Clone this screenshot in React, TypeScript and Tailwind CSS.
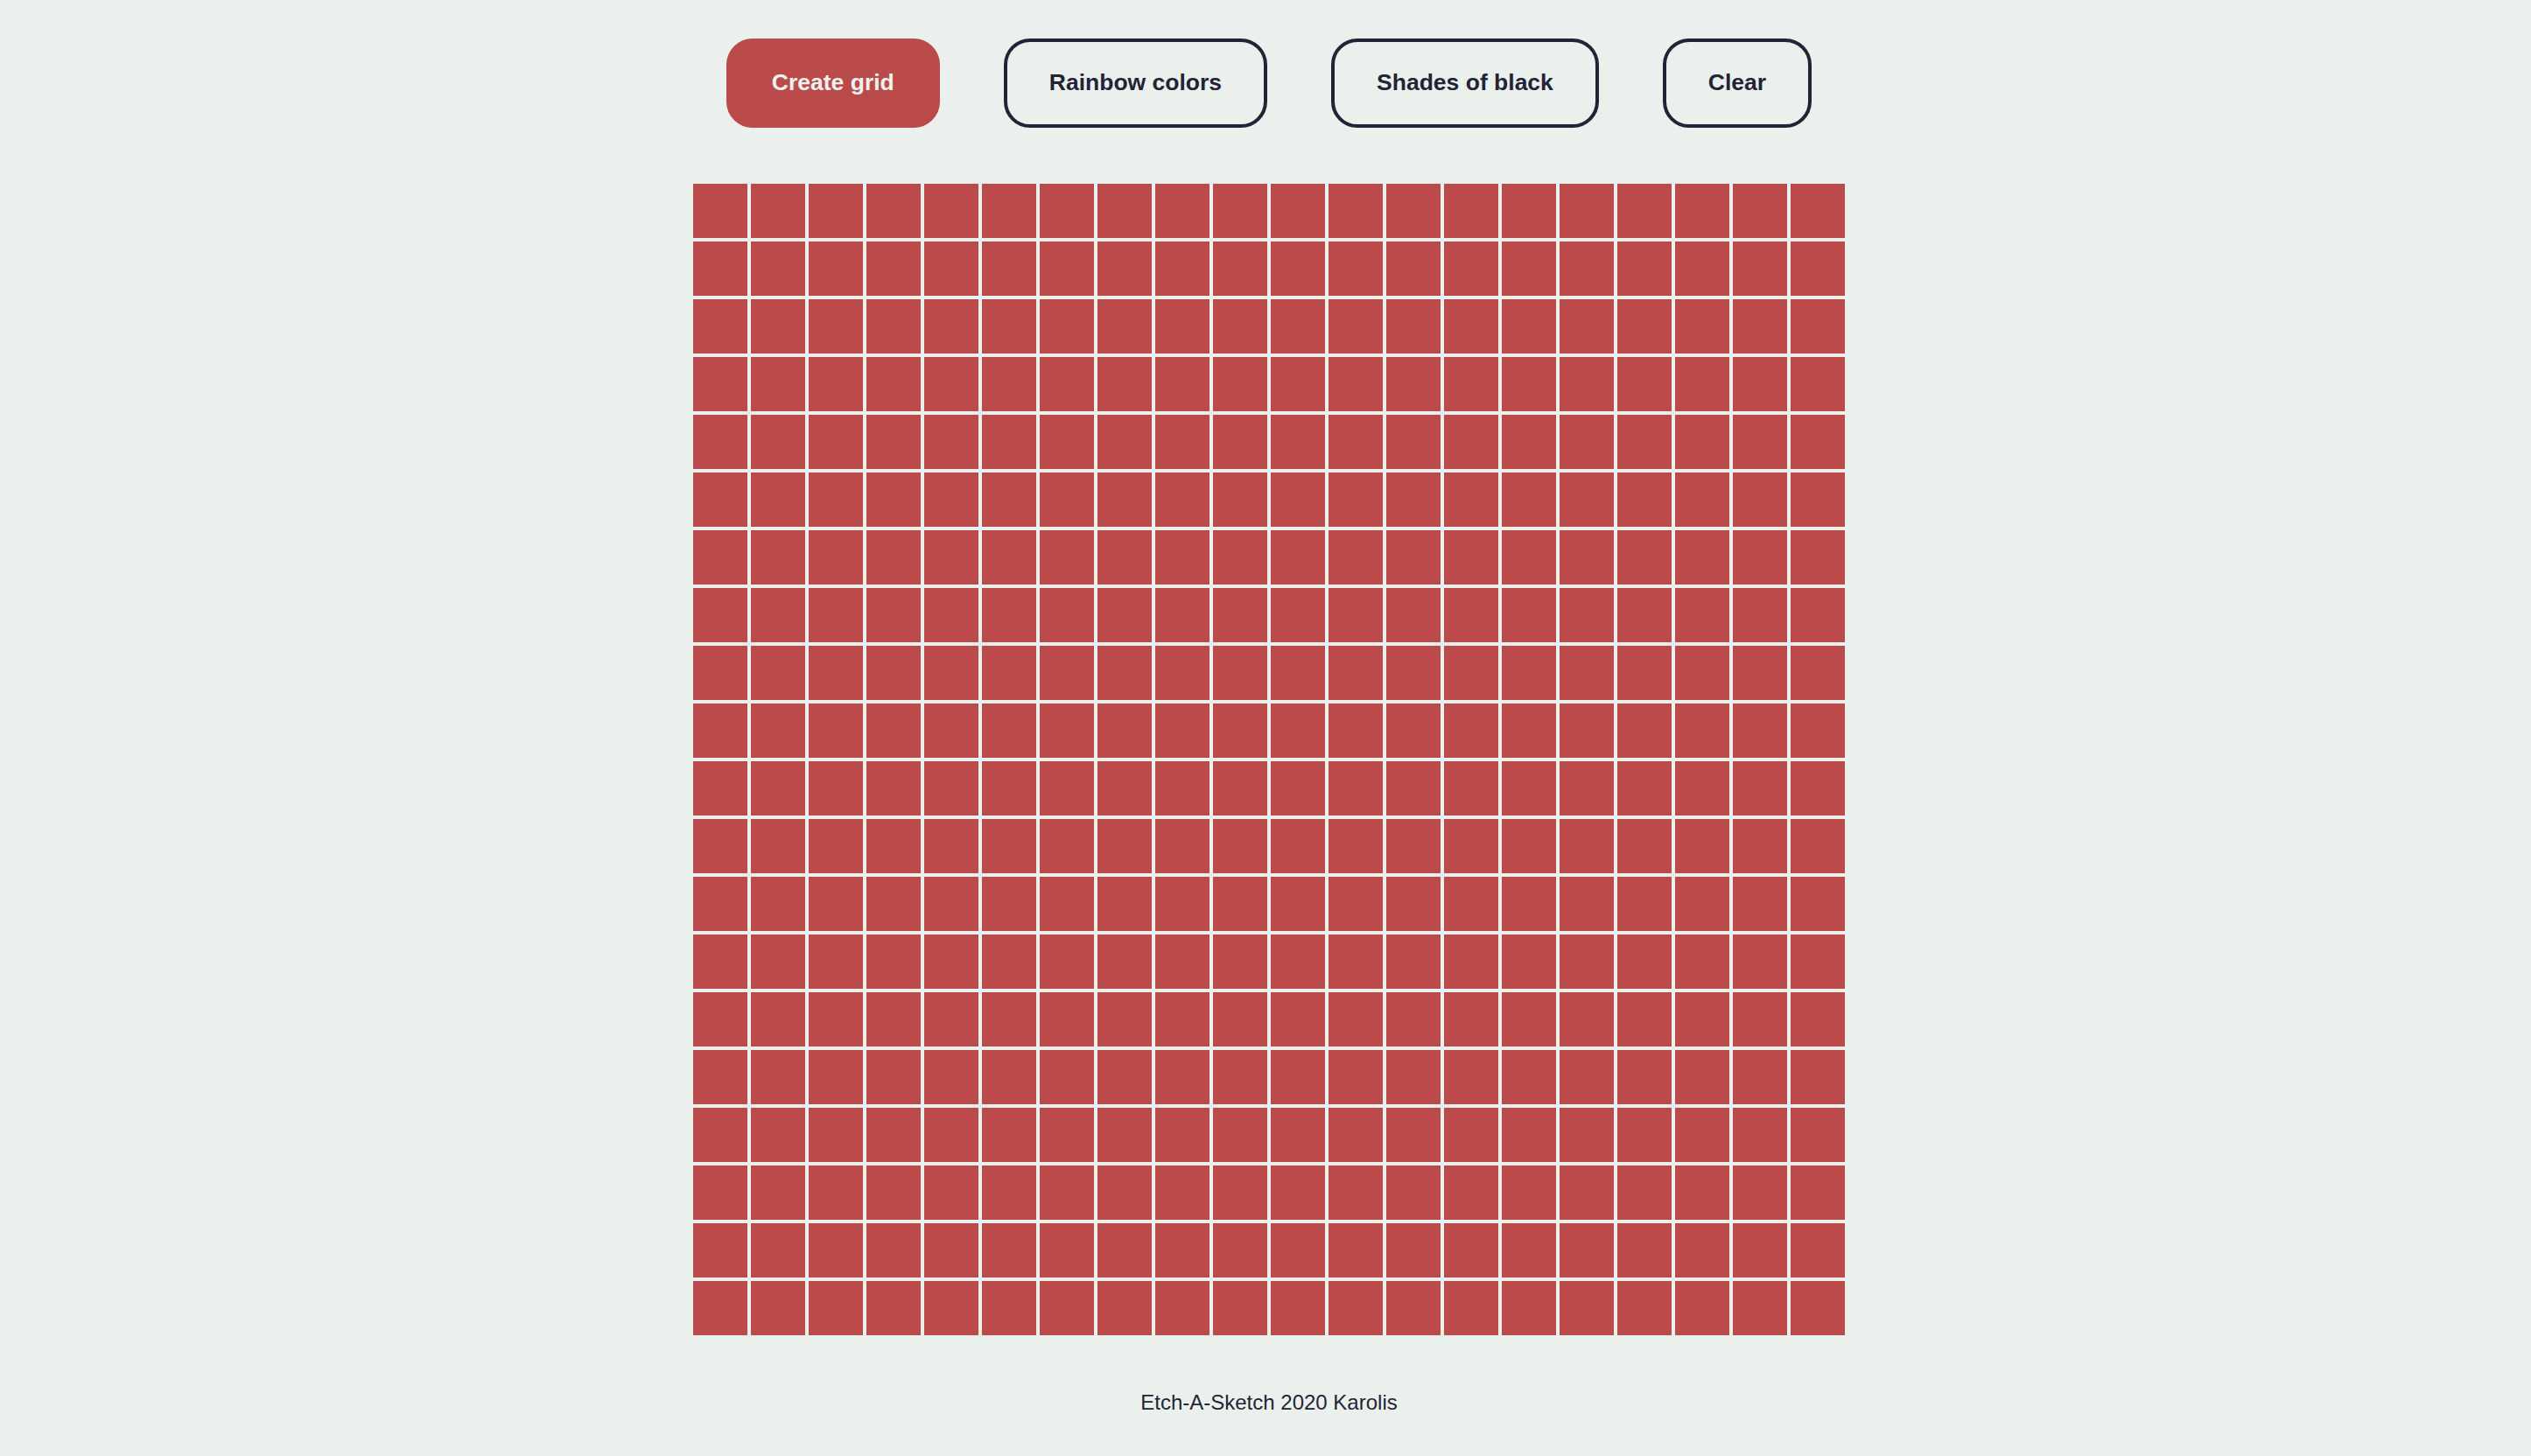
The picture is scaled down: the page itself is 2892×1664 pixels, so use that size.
import React from 'react';

const SIZE = 20;

export default function App() {
  const cells = Array.from({ length: SIZE * SIZE }, (_, i) => i);

  return (
    <div
      className="min-h-screen w-full bg-[#ecf0ec] text-[#1f2537] flex flex-col items-center pt-[44px] pl-[8px]"
      style={{ fontFamily: '"Liberation Sans", Arial, sans-serif' }}
    >
      {/* Controls */}
      <div className="flex items-center gap-[73px]">
        <button className="h-[102px] px-[48px] rounded-[30px] border-4 border-[#bb4a4a] bg-[#bb4a4a] text-[#eef2ee] text-[26.5px] font-bold">
          Create grid
        </button>
        <button className="h-[102px] px-[48px] rounded-[30px] border-4 border-[#1f2537] text-[26.5px] font-bold">
          Rainbow colors
        </button>
        <button className="h-[102px] px-[48px] rounded-[30px] border-4 border-[#1f2537] text-[26.5px] font-bold">
          Shades of black
        </button>
        <button className="h-[102px] px-[48px] rounded-[30px] border-4 border-[#1f2537] text-[26.5px] font-bold">
          Clear
        </button>
      </div>

      {/* Sketch board */}
      <div className="mt-[64px] grid grid-cols-[repeat(20,62px)] grid-rows-[repeat(20,62px)] gap-[4px]">
        {cells.map((i) => (
          <div key={i} className="bg-[#bb4a4a]" />
        ))}
      </div>

      <footer className="mt-[63px] text-[24px] leading-[28px]">Etch-A-Sketch 2020 Karolis</footer>
    </div>
  );
}
